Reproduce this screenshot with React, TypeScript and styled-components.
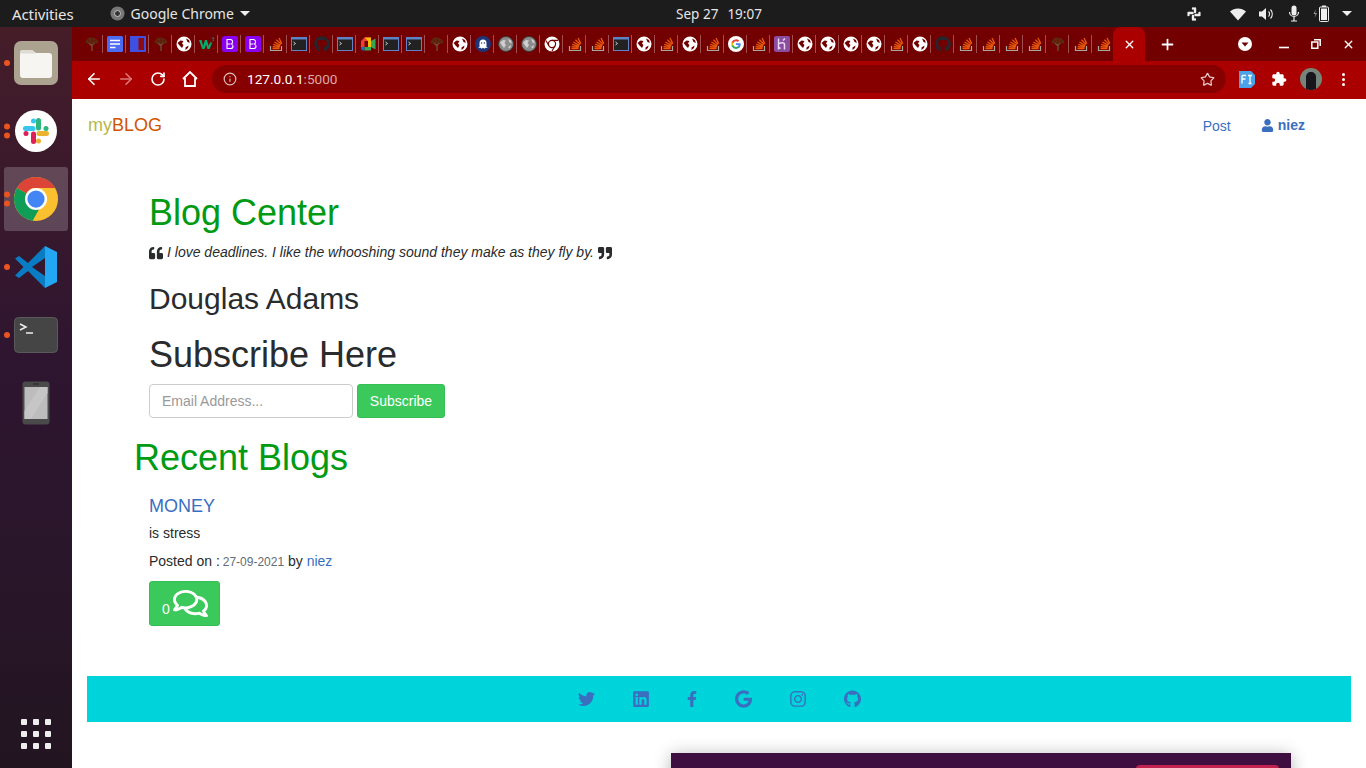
import React from "react";
import styled, { createGlobalStyle } from "styled-components";
import {
  FaTwitter, FaLinkedin, FaFacebookF, FaGoogle, FaInstagram, FaGithub,
  FaQuoteLeft, FaQuoteRight, FaUser, FaRegComments,
} from "react-icons/fa";
import { ArrowLeft, ArrowRight, RotateCw, Info, Star, X, Plus } from "lucide-react";

const Global = createGlobalStyle`
  html, body { margin: 0; padding: 0; background: #fff; }
  * { box-sizing: border-box; }
`;

const Screen = styled.div`
  position: relative;
  width: 1366px;
  height: 768px;
  overflow: hidden;
  display: flex;
  flex-direction: column;
  font-family: "Liberation Sans", Arial, sans-serif;
  font-size: 14px;
  color: #292b2c;
`;

/* ---------- GNOME top bar ---------- */
const TopBar = styled.div`
  height: 27px;
  flex: none;
  background: #1c1c1c;
  color: #e6e6e6;
  font-family: "Noto Sans", sans-serif;
  font-size: 14px;
  display: grid;
  grid-template-columns: 1fr auto 1fr;
  align-items: center;
  padding: 0 0 0 12px;
`;
const TopLeft = styled.div`
  display: flex;
  align-items: center;
`;
const Activities = styled.span`
  font-size: 15px;
  letter-spacing: -0.1px;
`;
const AppMenu = styled.div`
  display: flex;
  align-items: center;
  gap: 6px;
  margin-left: 36px;
`;
const Clock = styled.div`
  display: flex;
  gap: 9px;
  font-size: 13.5px;
  padding-left: 60px;
`;
const Tray = styled.div`
  display: flex;
  align-items: center;
  justify-content: flex-end;
  gap: 13px;
  padding-right: 14px;
`;
const TrayLead = styled.span`
  display: flex;
  margin-right: 16px;
`;
const Caret = styled.span`
  width: 0;
  height: 0;
  border-left: 5px solid transparent;
  border-right: 5px solid transparent;
  border-top: 5px solid #eee;
`;

const Body = styled.div`
  flex: 1;
  display: flex;
  min-height: 0;
`;

/* ---------- Dock ---------- */
const Dock = styled.nav`
  width: 72px;
  flex: none;
  background: linear-gradient(180deg, #451d29 0%, #2e1530 45%, #2a162b 70%, #221520 100%);
  display: flex;
  flex-direction: column;
  align-items: center;
  gap: 4px;
  padding: 4px 0 2px;
`;
const DockItem = styled.div<{ $active?: boolean }>`
  position: relative;
  width: 64px;
  height: 64px;
  display: flex;
  align-items: center;
  justify-content: center;
  border-radius: 3px;
  background: ${(p) => (p.$active ? "rgba(255,255,255,0.2)" : "transparent")};
`;
const Dots = styled.div`
  position: absolute;
  left: 0;
  top: 50%;
  transform: translateY(-50%);
  display: flex;
  flex-direction: column;
  gap: 3px;
`;
const Dot = styled.i`
  display: block;
  width: 6px;
  height: 6px;
  border-radius: 50%;
  background: #e95420;
`;
const AppGrid = styled.div`
  margin-top: auto;
  width: 64px;
  height: 64px;
  display: grid;
  grid-template-columns: repeat(3, 6px);
  grid-auto-rows: 6px;
  gap: 6px;
  align-content: center;
  justify-content: center;
  & > span {
    background: #eee;
    border-radius: 1px;
  }
`;

/* ---------- Chrome ---------- */
const Main = styled.div`
  flex: 1;
  min-width: 0;
  display: flex;
  flex-direction: column;
`;
const TabStrip = styled.div`
  height: 34px;
  flex: none;
  background: #720000;
  display: flex;
  align-items: stretch;
  padding-left: 8px;
`;
const PinnedTabs = styled.div`
  display: flex;
  width: 1033px;
  flex: none;
`;
const PinnedTab = styled.div<{ $last?: boolean }>`
  position: relative;
  width: 23px;
  height: 34px;
  flex: none;
  display: flex;
  align-items: center;
  justify-content: center;
  &::after {
    content: "";
    display: ${(p) => (p.$last ? "none" : "block")};
    position: absolute;
    right: 0;
    top: 8px;
    height: 18px;
    width: 1px;
    background: #a05050;
  }
`;
const ActiveTab = styled.div`
  width: 32px;
  height: 34px;
  flex: none;
  background: #aa0000;
  border-radius: 8px 8px 0 0;
  display: flex;
  align-items: center;
  justify-content: center;
  color: #fff;
  margin-right: 5px;
`;
const NewTab = styled.div`
  width: 34px;
  color: #fff;
  display: flex;
  align-items: center;
  justify-content: center;
`;
const WindowControls = styled.div`
  margin-left: auto;
  display: flex;
  align-items: center;
  color: #fff;
  padding-right: 2px;
`;
const WindowBtn = styled.div`
  width: 32px;
  height: 34px;
  display: flex;
  align-items: center;
  justify-content: center;
`;
const ProfileBtn = styled(WindowBtn)`
  margin-right: 7px;
`;
const Toolbar = styled.div`
  height: 38px;
  flex: none;
  background: #aa0000;
  display: flex;
  align-items: center;
  padding: 0 0 2px 6px;
  color: #fff;
`;
const NavBtn = styled.div<{ $dim?: boolean }>`
  width: 32px;
  height: 32px;
  flex: none;
  display: flex;
  align-items: center;
  justify-content: center;
  color: ${(p) => (p.$dim ? "#dd7777" : "#fff")};
`;
const Omnibox = styled.div`
  width: 1014px;
  height: 28px;
  flex: none;
  margin-left: 6px;
  background: #870000;
  border-radius: 14px;
  display: flex;
  align-items: center;
  padding: 0 11px;
  font-size: 13.6px;
  font-family: "Roboto", "Liberation Sans", sans-serif;
`;
const OmniInfo = styled.span`
  display: flex;
  color: #ddc0c0;
  margin-right: 10px;
`;
const Host = styled.span`
  color: #fff;
`;
const Port = styled.span`
  color: #dca8a8;
`;
const OmniStar = styled.span`
  margin-left: auto;
  display: flex;
  color: #e6c8c8;
`;
const ExtArea = styled.div`
  display: flex;
  align-items: center;
  margin-left: 5px;
`;
const ExtBtn = styled.div`
  width: 32px;
  height: 32px;
  display: flex;
  align-items: center;
  justify-content: center;
`;
const Kebab = styled.div`
  width: 3px;
  display: flex;
  flex-direction: column;
  gap: 2px;
  & > i {
    display: block;
    width: 3px;
    height: 3px;
    border-radius: 50%;
    background: #fff;
  }
`;

/* ---------- Page ---------- */
const Page = styled.div`
  flex: 1;
  background: #fff;
  padding: 0 15px;
  min-height: 0;
`;
const Navbar = styled.header`
  height: 52px;
  display: flex;
  align-items: center;
  padding: 0 1px;
`;
const Brand = styled.a`
  font-size: 18px;
  color: #d35400;
`;
const BrandMy = styled.span`
  color: #b5b84a;
`;
const NavLinks = styled.div`
  margin-left: auto;
  display: flex;
  align-items: center;
  color: #3a6fc0;
  padding-right: 45px;
`;
const PostLink = styled.a`
  margin-top: 2px;
  margin-right: 30px;
`;
const UserLink = styled.a`
  display: flex;
  align-items: center;
  gap: 4px;
  font-weight: bold;
`;
const Content = styled.main`
  padding-top: 41px;
  margin-left: 62px;
`;
const GreenTitle = styled.h1`
  margin: 0 0 8px;
  font-size: 36px;
  line-height: 42px;
  font-weight: 400;
  color: #009a13;
`;
const Quote = styled.p`
  margin: 0 0 18px;
  font-style: italic;
  line-height: 21px;
  display: flex;
  align-items: center;
  gap: 4px;
  svg { flex: none; color: #292b2c; }
`;
const Author = styled.h3`
  margin: 0 0 7px;
  font-size: 30px;
  line-height: 36px;
  font-weight: 400;
`;
const SubTitle = styled.h1`
  margin: 17px 0 8px;
  font-size: 36px;
  line-height: 42px;
  font-weight: 400;
`;
const SubForm = styled.form`
  display: flex;
  gap: 4px;
`;
const EmailInput = styled.input`
  width: 204px;
  height: 34px;
  border: 1px solid #ccc;
  border-radius: 4px;
  padding: 0 12px;
  font: inherit;
  &::placeholder { color: #999; }
`;
const GreenBtn = styled.button`
  background: #3bc95c;
  color: #fff;
  border: 1px solid #36bf55;
  border-radius: 3px;
  font: inherit;
  height: 34px;
  width: 88px;
  padding: 0;
`;
const RecentTitle = styled(GreenTitle)`
  margin: 19px 0 16px -15px;
`;
const PostTitle = styled.a`
  display: block;
  font-size: 18px;
  line-height: 22px;
  color: #3a6fc0;
  margin-bottom: 6px;
`;
const Line = styled.p`
  margin: 0 0 7px;
  line-height: 21px;
`;
const DateText = styled.small`
  font-size: 12px;
  color: #636c72;
  margin-left: -1px;
`;
const UserName = styled.a`
  color: #3a6fc0;
`;
const CommentBtn = styled.button`
  margin-top: 8px;
  width: 71px;
  height: 45px;
  background: #3bc95c;
  color: #fff;
  border: 1px solid #36bf55;
  border-radius: 3px;
  font: inherit;
  display: flex;
  align-items: center;
  padding: 0 0 0 12px;
  gap: 3px;
`;
const CommentCount = styled.span`
  margin-top: 11px;
`;
const Footer = styled.footer`
  margin-top: 50px;
  height: 46px;
  background: #00d4db;
  display: flex;
  align-items: center;
  justify-content: center;
  gap: 38px;
  color: #3a6fc0;
`;
const Social = styled.a<{ $w: number }>`
  width: ${(p) => p.$w}px;
  display: flex;
  justify-content: center;
`;
const SlackWindow = styled.div`
  position: absolute;
  left: 671px;
  top: 753px;
  width: 620px;
  height: 60px;
  background: #3f0e40;
  box-shadow: 0 2px 16px rgba(0, 0, 0, 0.3);
`;
const SlackButton = styled.div`
  position: absolute;
  left: 465px;
  top: 12px;
  width: 143px;
  height: 30px;
  border-radius: 4px;
  background: #c0214f;
`;

/* ---------- Drawn icons ---------- */
const Globe = () => (
  <svg width="16" height="16" viewBox="0 0 16 16">
    <circle cx="8" cy="8" r="7.5" fill="#fff" />
    <path d="M1.5 7 4.5 4.5l3 .5L6 7.5 7.5 9 6 12 4 10zM10 2.5l3 1.5.8 3-2.3-1zM9.5 11.5l3-2-.5 2.5-2.5 2z" fill="#720000" />
  </svg>
);
const GrayGlobe = () => (
  <svg width="16" height="16" viewBox="0 0 16 16">
    <circle cx="8" cy="8" r="7.5" fill="#8c8c8c" />
    <path d="M2 6.5 5 4l3 .5L6.5 7 8 9 6 12 4 9.5zM10 3l3 1.5.8 3-2.3-1zM10 11l3-2-1 3.5z" fill="#cfcfcf" />
    <circle cx="8" cy="8" r="7.5" fill="none" stroke="#3a3a3a" strokeWidth="1" />
  </svg>
);
const StackOv = () => (
  <svg width="16" height="16" viewBox="0 0 16 16">
    <path d="M2.5 10v4.5h11V10" fill="none" stroke="#a8a8a0" strokeWidth="1.2" />
    <path d="M4.5 12.5h7M4.6 10.6l7 .6M5.2 8.4l6.8 2M6.4 6l6 3.4M8.4 3.8l4.8 4.6M11 2l2.8 5.6" stroke="#e8590c" strokeWidth="1.3" fill="none" />
  </svg>
);
const Term = () => (
  <svg width="16" height="16" viewBox="0 0 16 16">
    <rect x="0.5" y="1.5" width="15" height="13" fill="#222" stroke="#5f83c4" strokeWidth="1" />
    <rect x="0.5" y="1.5" width="15" height="2" fill="#5f83c4" />
    <path d="M2.5 6l2 1.5-2 1.5" stroke="#ddd" strokeWidth="0.9" fill="none" />
  </svg>
);
const Tree = () => (
  <svg width="16" height="16" viewBox="0 0 16 16">
    <path d="M8 15V8M8 10 4.5 6.5M8 9l3.5-3" stroke="#6a5538" strokeWidth="1.3" fill="none" />
    <path d="M1.5 6.5C2 3 5 1 8 1.5s6 2 6.5 5c-1 1.5-2.5 1-3.5.5-1 .8-4.5.8-6 0-1 .6-2.5.8-3.5-.5z" fill="#5c2a10" />
    <path d="M4 3.5l1.5 2M8 2.5V6M12 3.5l-1.5 2" stroke="#720000" strokeWidth=".7" />
  </svg>
);
const Docs = () => (
  <svg width="16" height="16" viewBox="0 0 16 16">
    <rect width="16" height="16" rx="1.5" fill="#4d6bf2" />
    <path d="M3 4.5h10M3 8h10M3 11.5h5.5" stroke="#fff" strokeWidth="1.5" />
  </svg>
);
const PanelIco = () => (
  <svg width="16" height="16" viewBox="0 0 16 16">
    <rect width="16" height="16" fill="#3f4fe0" />
    <rect x="8.5" y="2" width="5.5" height="12" fill="#8b0a14" />
  </svg>
);
const W3 = () => (
  <svg width="16" height="16" viewBox="0 0 16 16">
    <path d="M0 4h2.6l1.5 6 1.8-6h2l1.8 6L11 6.5h2.2L10.6 13H8.4L7 8.5 5.6 13H3.2z" fill="#04aa6d" />
    <path d="M12.5 2h2.6l-1 1.4c.8.4.6 1.8-.8 1.8" stroke="#04aa6d" strokeWidth=".7" fill="none" />
  </svg>
);
const Boot = () => (
  <svg width="16" height="16" viewBox="0 0 16 16">
    <rect width="16" height="16" rx="2.5" fill="#8a00f0" />
    <path d="M5 3.5v9h3.6c1.5 0 2.4-.9 2.4-2.3 0-1.2-.8-2-2-2.2 1-.2 1.6-1 1.6-2 0-1.5-.9-2.5-2.4-2.5zM5 8h3.4" fill="none" stroke="#fff" strokeWidth="1.1" />
  </svg>
);
const GitH = () => <FaGithub size={16} color="#26262e" />;
const Meet = () => (
  <svg width="16" height="16" viewBox="0 0 16 16">
    <path d="M1 5l3.5-3.5H11V5H4.5v6H1z" fill="#ea4335" />
    <path d="M4.5 1.5H11V5H8z" fill="#fbbc04" />
    <path d="M1 11h3.5v3.5H3a2 2 0 0 1-2-2z" fill="#1967d2" />
    <path d="M4.5 11H11v3.5H4.5z" fill="#34a853" />
    <path d="M11 5v6l4.5 2.5v-11z" fill="#34a853" />
    <path d="M8 5h3v6H8z" fill="#fbbc04" />
  </svg>
);
const Ghost = () => (
  <svg width="16" height="16" viewBox="0 0 16 16">
    <circle cx="8" cy="8" r="8" fill="#1f3578" />
    <path d="M4.5 11V7a3.5 3.5 0 0 1 7 0v4l1.5 1-2.5-.2-1 1-1.5-1-1.5 1-1-1L3 12z" fill="#fff" />
    <circle cx="6.6" cy="7" r=".7" fill="#1f3578" />
    <circle cx="9.4" cy="7" r=".7" fill="#1f3578" />
  </svg>
);
const ChromeMono = () => (
  <svg width="16" height="16" viewBox="0 0 16 16">
    <circle cx="8" cy="8" r="7.5" fill="#fff" />
    <circle cx="8" cy="8" r="3.6" fill="#fff" stroke="#720000" strokeWidth="1.2" />
    <path d="M8 4.4h6M4.9 9.8 1.9 4.6M11.1 9.8 8 15" stroke="#720000" strokeWidth="1.1" />
  </svg>
);
const GoogleIco = () => (
  <svg width="16" height="16" viewBox="0 0 48 48">
    <circle cx="24" cy="24" r="24" fill="#fff" />
    <path d="M38 24.5c0-1-.1-2-.3-3H24v5.7h7.9a6.8 6.8 0 0 1-2.9 4.4v3.7h4.7c2.8-2.6 4.3-6.3 4.3-10.8z" fill="#4285f4" />
    <path d="M24 39c3.9 0 7.2-1.3 9.7-3.5L29 31.8c-1.3.9-3 1.4-5 1.4-3.8 0-7-2.5-8.2-6h-4.8v3.7A15 15 0 0 0 24 39z" fill="#34a853" />
    <path d="M15.8 27.2a9 9 0 0 1 0-5.8v-3.7h-4.8a15 15 0 0 0 0 13.2z" fill="#fbbc05" />
    <path d="M24 15.5c2.2 0 4.1.8 5.6 2.2l4.2-4.2A15 15 0 0 0 11 17.7l4.8 3.7c1.2-3.5 4.4-5.9 8.2-5.9z" fill="#ea4335" />
  </svg>
);
const Heroku = () => (
  <svg width="16" height="16" viewBox="0 0 16 16">
    <rect width="16" height="16" rx="2" fill="#8a4da0" />
    <path d="M4.5 2.5v11M4.5 8c2-1.5 6-2 6 .5v5M11 2.5l-2 2M4.5 11l2 1.5" stroke="#ead8f0" strokeWidth="1.5" fill="none" />
  </svg>
);

const iconMap: Record<string, React.FC> = {
  g: Globe, a: GrayGlobe, s: StackOv, t: Term, r: Tree, d: Docs, p: PanelIco, w: W3, b: Boot,
  h: GitH, m: Meet, o: Ghost, c: ChromeMono, G: GoogleIco, k: Heroku,
};
const tabs = "rdprgwbbsthtmtt" + "rgoaacsstgsgsGskggggsghssssrss";

const FilesIcon = () => (
  <svg width="46" height="46" viewBox="0 0 46 46">
    <rect x="1" y="1" width="44" height="44" rx="7" fill="#aba38f" />
    <path d="M7 13a3 3 0 0 1 3-3h9l4 3h13a3 3 0 0 1 3 3v19a3 3 0 0 1-3 3H10a3 3 0 0 1-3-3z" fill="#f6f5f2" />
    <path d="M7 13a3 3 0 0 1 3-3h9l4 3.5H7z" fill="#dedbd3" />
  </svg>
);
const SlackIcon = () => (
  <svg width="44" height="44" viewBox="0 0 44 44">
    <circle cx="22" cy="22" r="21" fill="#fff" />
    <g strokeWidth="5" strokeLinecap="round" fill="none">
      <path d="M24.5 11.5V19M32 19.5h.01" stroke="#2eb67d" />
      <path d="M25 24.5h7.5M24.5 32v.01" stroke="#ecb22e" />
      <path d="M19.5 25v7.5M12 24.5h.01" stroke="#e01e5a" />
      <path d="M11.5 19.5H19M19.5 12v.01" stroke="#36c5f0" />
    </g>
  </svg>
);
const ChromeIcon = () => (
  <svg width="46" height="46" viewBox="0 0 48 48">
    <circle cx="24" cy="24" r="23" fill="#fbc02d" />
    <path d="M24 1a23 23 0 0 1 19.9 11.5H24a11.5 11.5 0 0 0-10 5.7L4.1 12.5A23 23 0 0 1 24 1z" fill="#db4437" />
    <path d="M4.1 12.5A23 23 0 0 0 20.5 46.7L30 29.8a11.5 11.5 0 0 1-16-11.6z" fill="#0f9d58" />
    <circle cx="24" cy="24" r="11.5" fill="#fff" />
    <circle cx="24" cy="24" r="9" fill="#4285f4" />
  </svg>
);
const VSCodeIcon = () => (
  <svg width="44" height="44" viewBox="0 0 44 44">
    <path d="M31 1 14 18 5 11 1 13.5 9.5 22 1 30.5 5 33l9-7 17 17V31L18 22 31 13z" fill="#0a7cc4" />
    <path d="M31 1v42l12-6V7z" fill="#23a7f2" />
  </svg>
);
const TerminalIcon = () => (
  <svg width="44" height="36" viewBox="0 0 44 36">
    <rect x="0.5" y="0.5" width="43" height="35" rx="4" fill="#454545" stroke="#5a5a5a" />
    <path d="M6 7l6 3-6 3M12 16h7" stroke="#eee" strokeWidth="1.5" fill="none" />
  </svg>
);
const PhoneIcon = () => (
  <svg width="28" height="44" viewBox="0 0 28 44">
    <rect x="0.5" y="0.5" width="27" height="43" rx="3" fill="#4a4a4a" />
    <rect x="2.5" y="6" width="23" height="32" fill="#bdbdbd" />
    <path d="M2.5 30 18 6h7.5v6L9 38H2.5z" fill="#c6c6c6" />
    <path d="M11 3h6" stroke="#222" strokeWidth="1" />
  </svg>
);
const TrayWifi = () => (
  <svg width="16" height="14" viewBox="0 0 16 14">
    <path d="M0 4.5C4.5.5 11.5.5 16 4.5L8 13.5z" fill="#eee" />
  </svg>
);
const TrayVol = () => (
  <svg width="16" height="14" viewBox="0 0 16 14">
    <path d="M0 4.5h3L7 1v12L3 9.5H0z" fill="#eee" />
    <path d="M9.5 4.5a3.5 3.5 0 0 1 0 5M11.5 2.5a6.5 6.5 0 0 1 0 9" stroke="#eee" strokeWidth="1.1" fill="none" />
  </svg>
);
const TrayMic = () => (
  <svg width="12" height="17" viewBox="0 0 12 17">
    <rect x="3.5" y="0.5" width="5" height="10" rx="2.5" fill="#eee" />
    <path d="M1.5 7a4.5 4.5 0 0 0 9 0M6 11.5V15.5M3 16h6" stroke="#eee" strokeWidth="1.2" fill="none" />
  </svg>
);
const TrayBattery = () => (
  <svg width="16" height="17" viewBox="0 0 16 17">
    <path d="M3 4 .5 9h2L1.5 13 4 8H2z" fill="#999" />
    <rect x="6.5" y="2" width="9" height="14.5" rx="1" fill="none" stroke="#eee" />
    <rect x="8" y="3.5" width="6" height="11.5" fill="#eee" />
    <rect x="9" y="0.5" width="4" height="1.5" fill="#eee" />
  </svg>
);
const TraySlack = () => (
  <svg width="14" height="14" viewBox="0 0 14 14">
    <g stroke="#eee" strokeWidth="2.4" strokeLinecap="round" fill="none">
      <path d="M8 1.5v3.5M12.5 6h-.01" />
      <path d="M8.5 8h4M8 12.5v-.01" />
      <path d="M6 9v3.5M1.5 8h.01" />
      <path d="M1.5 6h4M6 1.5v.01" />
    </g>
  </svg>
);
const ChromeGray = () => (
  <svg width="15" height="15" viewBox="0 0 16 16">
    <circle cx="8" cy="8" r="7.5" fill="#777" />
    <circle cx="8" cy="8" r="3.2" fill="#333" stroke="#ccc" strokeWidth="1" />
  </svg>
);
const HomeIco = () => (
  <svg width="18" height="18" viewBox="0 0 18 18">
    <path d="M2 9 9 2l7 7M4 8v8h10V8" fill="none" stroke="#fff" strokeWidth="1.8" />
  </svg>
);
const DropCircle = () => (
  <svg width="14" height="14" viewBox="0 0 14 14">
    <circle cx="7" cy="7" r="7" fill="#fff" />
    <path d="M3.5 5.5h7L7 9.5z" fill="#720000" />
  </svg>
);
const MinIco = () => (
  <svg width="10" height="10" viewBox="0 0 10 10">
    <path d="M0 8.5h10" stroke="#fff" strokeWidth="1.6" />
  </svg>
);
const RestoreIco = () => (
  <svg width="10" height="10" viewBox="0 0 10 10">
    <path d="M3 .8h6.2V7M.8 3h6v6.2H.8z" fill="none" stroke="#fff" strokeWidth="1.5" />
  </svg>
);
const FtIco = () => (
  <svg width="16" height="17" viewBox="0 0 16 17">
    <path d="M0 0h12l4 4v9l-4 4H0z" fill="#4aa3e8" />
    <path d="M3 4.5v8M3 4.5h4M3 8h3.5M9 4.5h4M11 4.5v8M9.5 12.5h3" stroke="#fff" strokeWidth="1.3" fill="none" />
  </svg>
);
const PuzzleIco = () => (
  <svg width="16" height="16" viewBox="0 0 24 24">
    <path d="M20.5 11H19V7c0-1.1-.9-2-2-2h-4V3.5C13 2.12 11.88 1 10.5 1S8 2.12 8 3.5V5H4c-1.1 0-1.99.9-1.99 2v3.8H3.5c1.49 0 2.7 1.21 2.7 2.7s-1.21 2.7-2.7 2.7H2V20c0 1.1.9 2 2 2h3.8v-1.5c0-1.49 1.21-2.7 2.7-2.7 1.49 0 2.7 1.21 2.7 2.7V22H17c1.1 0 2-.9 2-2v-4h1.5c1.38 0 2.5-1.12 2.5-2.5S21.88 11 20.5 11z" fill="#fff" />
  </svg>
);
const AvatarIco = () => (
  <svg width="22" height="22" viewBox="0 0 22 22">
    <defs>
      <clipPath id="av">
        <circle cx="11" cy="11" r="11" />
      </clipPath>
    </defs>
    <g clipPath="url(#av)">
      <rect width="22" height="22" fill="#76857a" />
      <path d="M6 22V9c0-3 2-5 5-5s5 2 5 5v13z" fill="#16161c" />
    </g>
  </svg>
);

export default function App() {
  return (
    <Screen>
      <Global />
      <TopBar>
        <TopLeft>
          <Activities>Activities</Activities>
          <AppMenu>
            <ChromeGray />
            <span>Google Chrome</span>
            <Caret />
          </AppMenu>
        </TopLeft>
        <Clock>
          <span>Sep 27</span>
          <span>19:07</span>
        </Clock>
        <Tray>
          <TrayLead><TraySlack /></TrayLead>
          <TrayWifi />
          <TrayVol />
          <TrayMic />
          <TrayBattery />
          <Caret />
        </Tray>
      </TopBar>
      <Body>
        <Dock>
          <DockItem><Dots><Dot /></Dots><FilesIcon /></DockItem>
          <DockItem><Dots><Dot /><Dot /></Dots><SlackIcon /></DockItem>
          <DockItem $active><Dots><Dot /><Dot /></Dots><ChromeIcon /></DockItem>
          <DockItem><Dots><Dot /></Dots><VSCodeIcon /></DockItem>
          <DockItem><Dots><Dot /></Dots><TerminalIcon /></DockItem>
          <DockItem><PhoneIcon /></DockItem>
          <AppGrid>
            {Array.from({ length: 9 }).map((_, i) => <span key={i} />)}
          </AppGrid>
        </Dock>
        <Main>
          <TabStrip>
            <PinnedTabs>
              {tabs.split("").map((k, i) => {
                const Ico = iconMap[k];
                return (
                  <PinnedTab key={i} $last={i === tabs.length - 1}>
                    <Ico />
                  </PinnedTab>
                );
              })}
            </PinnedTabs>
            <ActiveTab><X size={13} strokeWidth={2.5} /></ActiveTab>
            <NewTab><Plus size={17} strokeWidth={2.5} /></NewTab>
            <WindowControls>
              <ProfileBtn><DropCircle /></ProfileBtn>
              <WindowBtn><MinIco /></WindowBtn>
              <WindowBtn><RestoreIco /></WindowBtn>
              <WindowBtn><X size={13} strokeWidth={2.5} /></WindowBtn>
            </WindowControls>
          </TabStrip>
          <Toolbar>
            <NavBtn><ArrowLeft size={18} strokeWidth={2.2} /></NavBtn>
            <NavBtn $dim><ArrowRight size={18} strokeWidth={2.2} /></NavBtn>
            <NavBtn><RotateCw size={16} strokeWidth={2.4} /></NavBtn>
            <NavBtn><HomeIco /></NavBtn>
            <Omnibox>
              <OmniInfo><Info size={14} /></OmniInfo>
              <Host>127.0.0.1</Host>
              <Port>:5000</Port>
              <OmniStar><Star size={15} /></OmniStar>
            </Omnibox>
            <ExtArea>
              <ExtBtn><FtIco /></ExtBtn>
              <ExtBtn><PuzzleIco /></ExtBtn>
              <ExtBtn><AvatarIco /></ExtBtn>
              <ExtBtn><Kebab><i /><i /><i /></Kebab></ExtBtn>
            </ExtArea>
          </Toolbar>
          <Page>
            <Navbar>
              <Brand><BrandMy>my</BrandMy>BLOG</Brand>
              <NavLinks>
                <PostLink>Post</PostLink>
                <UserLink><FaUser size={13} /> niez</UserLink>
              </NavLinks>
            </Navbar>
            <Content>
              <GreenTitle>Blog Center</GreenTitle>
              <Quote>
                <FaQuoteLeft size={14} />
                <span>I love deadlines. I like the whooshing sound they make as they fly by.</span>
                <FaQuoteRight size={14} />
              </Quote>
              <Author>Douglas Adams</Author>
              <SubTitle>Subscribe Here</SubTitle>
              <SubForm onSubmit={(e) => e.preventDefault()}>
                <EmailInput placeholder="Email Address..." />
                <GreenBtn type="button">Subscribe</GreenBtn>
              </SubForm>
              <RecentTitle>Recent Blogs</RecentTitle>
              <PostTitle>MONEY</PostTitle>
              <Line>is stress</Line>
              <Line>
                Posted on : <DateText>27-09-2021</DateText> by <UserName>niez</UserName>
              </Line>
              <CommentBtn type="button">
                <CommentCount>0</CommentCount>
                <FaRegComments size={35} />
              </CommentBtn>
            </Content>
            <Footer>
              <Social $w={17}><FaTwitter size={18} /></Social>
              <Social $w={16}><FaLinkedin size={18} /></Social>
              <Social $w={10}><FaFacebookF size={18} /></Social>
              <Social $w={17}><FaGoogle size={18} /></Social>
              <Social $w={16}><FaInstagram size={18} /></Social>
              <Social $w={17}><FaGithub size={18} /></Social>
            </Footer>
          </Page>
        </Main>
      </Body>
      <SlackWindow><SlackButton /></SlackWindow>
    </Screen>
  );
}
